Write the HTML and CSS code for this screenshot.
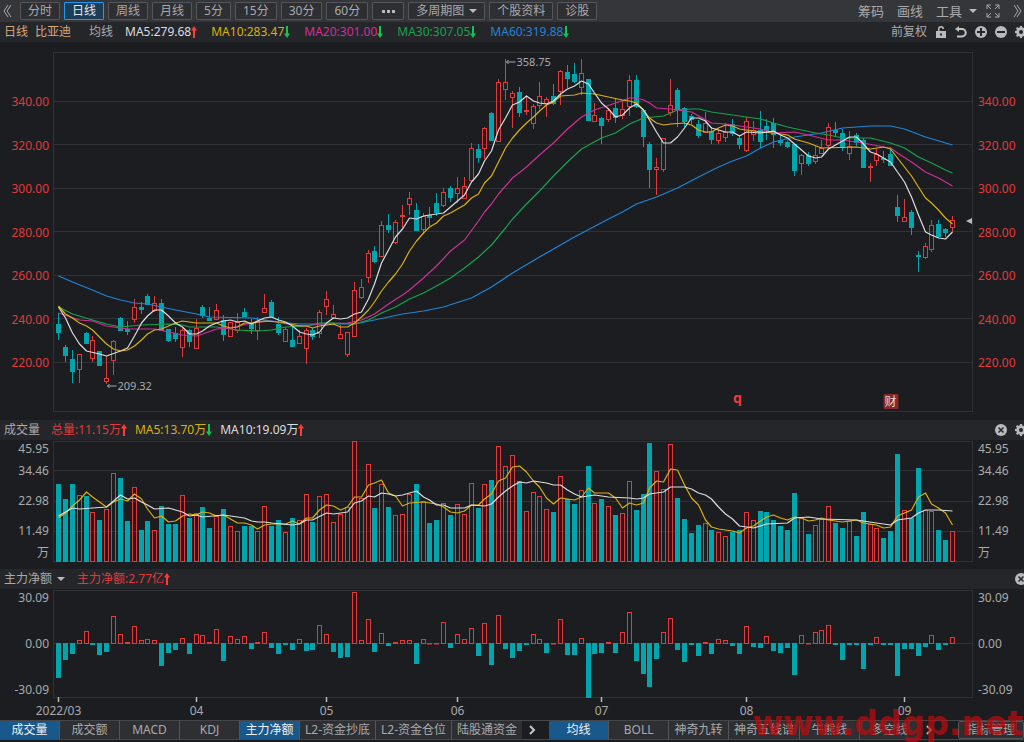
FILE: index.html
```html
<!DOCTYPE html>
<html lang="zh-CN">
<head>
	<meta charset="utf-8" />
	<title>比亚迪 日线</title>
	<link rel="stylesheet" href="styles.css">
</head>
<body>
	<svg class="defs" aria-hidden="true">
		<symbol id="gear" viewBox="0 0 12 12">
			<path fill-rule="evenodd" d="M5 0h2l.3 1.6 1 .4L9.600 1.100 11 2.500l-.9 1.300.4 1L12 5v2l-1.500.3-.4 1 .9 1.300L9.600 11l-1.300-.9-1 .4L7 12H5l-.3-1.500-1-.4-1.300.9L1 9.600l.9-1.300-.4-1L0 7V5l1.500-.3.4-1L1 2.400 2.400 1l1.300.9 1-.4zM6 4a2 2 0 1 0 0 4 2 2 0 0 0 0-4z" />
		</symbol>
		<symbol id="close" viewBox="0 0 12 12">
			<circle cx="6" cy="6" r="6" />
			<path class="cut" d="M3.500 3.500l5 5M8.500 3.500l-5 5" />
		</symbol>
		<symbol id="up" viewBox="0 0 6 12">
			<path d="M3 0l3 4.500H4V12H2V4.500H0z" />
		</symbol>
		<symbol id="down" viewBox="0 0 6 12">
			<path d="M3 12l3-4.500H4V0H2v7.500H0z" />
		</symbol>
		<symbol id="next" viewBox="0 0 8 10">
			<path class="line" d="M2 1l4 4-4 4" />
		</symbol>
	</svg>

	<header class="toolbar">
		<button class="icon" aria-label="收起"><svg width="9" height="12"><path class="thin" d="M5 0L1 6l4 6M8 0L4 6l4 6" /></svg></button>
		<nav class="periods">
			<button>分时</button>
			<button class="active">日线</button>
			<button>周线</button>
			<button>月线</button>
			<button>5分</button>
			<button>15分</button>
			<button>30分</button>
			<button>60分</button>
			<button aria-label="更多"><svg width="16" height="3"><path d="M2 0h3v3H2zM7 0h3v3H7zM12 0h3v3h-3z" /></svg></button>
			<span class="drop boxed"><select aria-label="多周期图"><option>多周期图</option></select></span>
			<button>个股资料</button>
			<button>诊股</button>
		</nav>
		<div class="tools">
			<button>筹码</button>
			<button>画线</button>
			<span class="drop"><select aria-label="工具"><option>工具</option></select></span>
			<button class="icon" aria-label="全屏"><svg width="14" height="14"><path class="thin" d="M1 5V1h4M1 1l4 4M9 1h4v4M13 1L9 5M1 9v4h4M1 13l4-4M13 9v4H9M13 13L9 9" /></svg></button>
			<button class="icon" aria-label="展开"><svg width="9" height="12"><path class="thin" d="M1 0l4 6-4 6M4 0l4 6-4 6" /></svg></button>
		</div>
	</header>

	<section class="panel price">
		<div class="info">
			<span class="stock">日线</span>
			<span class="stock">比亚迪</span>
			<span class="label">均线</span>
			<span class="white">MA5:279.68<svg class="up"><use href="#up" /></svg></span>
			<span class="yellow">MA10:283.47<svg class="down"><use href="#down" /></svg></span>
			<span class="pink">MA20:301.00<svg class="down"><use href="#down" /></svg></span>
			<span class="green">MA30:307.05<svg class="down"><use href="#down" /></svg></span>
			<span class="blue">MA60:319.88<svg class="down"><use href="#down" /></svg></span>
			<div class="actions">
				<button>前复权</button>
				<button class="icon" aria-label="锁定"><svg width="12" height="12"><path fill-rule="evenodd" d="M1 5h2V3a3 3 0 0 1 6 0H7.500a1.500 1.500 0 0 0-3 0v2H11v7H1zM5 7.500v2h2v-2z" /></svg></button>
				<button class="icon" aria-label="撤销"><svg width="12" height="12"><path d="M4 0v6L0 3z" /><path class="line" d="M3 3h4a3.500 3.500 0 0 1 0 7.500H2" /></svg></button>
				<button class="icon" aria-label="放大"><svg width="12" height="12"><circle cx="6" cy="6" r="6" /><path class="cut plus" d="M2 6h8M6 2v8" /></svg></button>
				<button class="icon" aria-label="缩小"><svg width="12" height="12"><circle cx="6" cy="6" r="6" /><path class="cut plus" d="M2 6h8" /></svg></button>
				<button class="icon" aria-label="设置"><svg width="12" height="12"><use href="#gear" /></svg></button>
			</div>
		</div>
		<div class="chart">
			<div class="axis"><span>340.00</span><span>320.00</span><span>300.00</span><span>280.00</span><span>260.00</span><span>240.00</span><span>220.00</span></div>
			<svg class="plot" id="price"></svg>
			<div class="axis right"><span>340.00</span><span>320.00</span><span>300.00</span><span>280.00</span><span>260.00</span><span>240.00</span><span>220.00</span></div>
		</div>
	</section>

	<section class="panel volume">
		<div class="info">
			<span class="label">成交量</span>
			<span class="red">总量:11.15万<svg class="up"><use href="#up" /></svg></span>
			<span class="yellow">MA5:13.70万<svg class="down"><use href="#down" /></svg></span>
			<span class="white">MA10:19.09万<svg class="up"><use href="#up" /></svg></span>
			<div class="actions">
				<button class="icon" aria-label="关闭"><svg width="12" height="12"><use href="#close" /></svg></button>
				<button class="icon" aria-label="设置"><svg width="12" height="12"><use href="#gear" /></svg></button>
			</div>
		</div>
		<div class="chart">
			<div class="axis"><span>45.95</span><span>34.46</span><span>22.98</span><span>11.49</span><span>万</span></div>
			<svg class="plot" id="volume"></svg>
			<div class="axis right"><span>45.95</span><span>34.46</span><span>22.98</span><span>11.49</span><span>万</span></div>
		</div>
	</section>

	<section class="panel flow">
		<div class="info">
			<span class="drop"><select aria-label="指标"><option>主力净额</option></select></span>
			<span class="red">主力净额:2.77亿<svg class="up"><use href="#up" /></svg></span>
			<div class="actions">
				<button class="icon" aria-label="关闭"><svg width="12" height="12"><use href="#close" /></svg></button>
			</div>
		</div>
		<div class="chart">
			<div class="axis"><span>30.09</span><span>0.00</span><span>-30.09</span></div>
			<svg class="plot" id="flow"></svg>
			<div class="axis right"><span>30.09</span><span>0.00</span><span>-30.09</span></div>
		</div>
	</section>

	<footer class="bottom">
		<nav class="tabs">
			<button class="active">成交量</button>
			<button>成交额</button>
			<button>MACD</button>
			<button>KDJ</button>
			<button class="active">主力净额</button>
			<button>L2-资金抄底</button>
			<button>L2-资金仓位</button>
			<button>陆股通资金</button>
		</nav>
		<button class="icon" aria-label="下一组"><svg width="8" height="10"><use href="#next" /></svg></button>
		<nav class="tabs">
			<button class="active">均线</button>
			<button>BOLL</button>
			<button>神奇九转</button>
			<button>神奇五线谱</button>
			<button>牛熊线</button>
			<button>多空线</button>
		</nav>
		<button class="icon" aria-label="下一组"><svg width="8" height="10"><use href="#next" /></svg></button>
		<button class="manage">指标管理</button>
		<span class="watermark">www.ddgp.net</span>
	</footer>

	<script src="chart.js"></script>
</body>
</html>
```

FILE: styles.css
```css
body {
	margin: 0;
	min-height: 100vh;
	overflow: hidden;
	background: #1c1d20;
	color: #a9aaac;
	font-family: "Noto Sans", "Noto Sans CJK SC", sans-serif;
	font-size: 12px;
	line-height: 16px;
}

button, select {
	margin: 0;
	padding: 0;
	border: 0;
	background: none;
	color: inherit;
	font: inherit;
	white-space: nowrap;
}

select {
	appearance: none;
}

svg {
	fill: #b9babc;
}

.defs {
	display: none;
}

.thin {
	fill: none;
	stroke: #a9aaac;
}

.line {
	fill: none;
	stroke: #c4c5c7;
	stroke-width: 2;
}

.cut {
	fill: none;
	stroke: #25262a;
	stroke-width: 1.5;
}

.plus {
	stroke-width: 2;
}

.icon {
	display: flex;
	flex: none;
	align-items: center;
	justify-content: center;
}

.drop {
	display: flex;
	align-items: center;
	gap: 4px;
}

	.drop::after {
		content: "";
		border: 4px solid transparent;
		border-top-color: #b9babc;
		border-bottom: 0;
	}

/* toolbar */

.toolbar {
	display: flex;
	align-items: center;
	height: 22px;
	padding: 0 2px 0 3px;
	background: #35363a;
}

.periods {
	display: flex;
	gap: 4px;
	margin-left: 8px;
}

	.periods > * {
		box-sizing: border-box;
		height: 18px;
		padding: 0 7px;
		border: 1px solid #55565a;
		border-radius: 1px;
		background: #2e2f33;
	}

	.periods > button {
		line-height: 16px;
	}

		.periods > button svg {
			display: block;
		}

	.periods > .active {
		border-color: #1e9bf0;
		background: #1d3c56;
		color: #e4e8ec;
	}

.tools {
	display: flex;
	align-items: center;
	gap: 13px;
	margin-left: auto;
	font-size: 13px;
}

	.tools .drop {
		gap: 6px;
		margin-right: -4px;
	}

/* panels */

.info {
	display: flex;
	align-items: center;
	gap: 14px;
	height: 20px;
	padding: 0 0 0 4px;
	background: #25262a;
}

	.info span {
		white-space: nowrap;
	}

	.info span > svg {
		width: 6px;
		height: 12px;
		vertical-align: -2px;
	}

.actions {
	display: flex;
	align-items: center;
	gap: 8px;
	margin: 0 -3px 0 auto;
}

.stock { color: #d5a679; }
.stock + .stock { margin-left: -7px; }
.stock + .label { margin: 0 -2px 0 4px; }
.white { color: #dcdddf; }
.yellow { color: #d9b012; }
.pink { color: #cf3097; }
.green { color: #16a34a; }
.blue { color: #2185d5; }
.red { color: #e03a3a; }
svg.up { fill: #ff3b3b; }
svg.down { fill: #14c452; }

.chart {
	display: grid;
	grid-template-columns: 53px minmax(0, 1fr) 51px;
}

.plot {
	display: block;
	width: 100%;
	overflow: visible;
}

.axis {
	display: flex;
	flex-direction: column;
	justify-content: space-between;
	padding-right: 4px;
	text-align: right;
}

	.axis.right {
		padding: 0 0 0 5px;
		text-align: left;
	}

.price .chart { padding: 10px 0 8px; }
.price .plot { height: 360px; }

.price .axis {
	margin: 42px 0 41px;
	color: #e03a3a;
}

.volume .info, .flow .info {
	gap: 8px;
}

.volume .label { margin-right: 3px; }
.volume .chart { padding: 1px 0 7px; }
.volume .plot { height: 121px; }

.volume .axis {
	display: grid;
	grid-template-columns: 1fr;
	grid-template-rows: 22px 30px 30px 22px 16px;
	align-content: start;
}

.flow .red { margin-left: 4px; }
.flow .chart { padding: 1px 0 22px; }
.flow .plot { height: 108px; }

/* bottom tabs */

.bottom {
	position: relative;
	display: flex;
	align-items: center;
	height: 18px;
	border-top: 1px solid #45464a;
	border-bottom: 1px solid #45464a;
}

	.bottom > .icon {
		width: 20px;
		margin-right: 7px;
	}

.tabs {
	display: flex;
	gap: 1px;
	background: #55565a;
}

	.tabs button {
		height: 18px;
		min-width: 59px;
		padding: 0 5px;
		background: #2e2f33;
	}

	.tabs .active {
		background: #19588a;
		color: #f0f2f4;
	}

.manage {
	height: 18px;
	margin-left: auto;
	padding: 0 8px;
	border: 1px solid #55565a;
	border-radius: 2px;
	background: #2e2f33;
}

.watermark {
	position: absolute;
	right: 1px;
	bottom: -3px;
	color: rgba(190, 10, 14, .72);
	font: bold 33px/36px "DejaVu Sans", sans-serif;
	pointer-events: none;
}

/* plot contents */

.frame, .grid {
	fill: none;
	stroke: #303135;
}

.rise {
	fill: none;
	stroke: #e23a3a;
}

.fall {
	fill: #00a5ae;
	stroke: #00a5ae;
}

.ma {
	fill: none;
	stroke: currentColor;
	stroke-width: 1.2;
	stroke-linejoin: round;
}

.note, .date {
	fill: #a9aaac;
}

.note {
	font-size: 11px;
}

.date {
	text-anchor: middle;
}

.tick {
	stroke: #b9babc;
	stroke-width: 1.5;
}

.mark {
	fill: #f03a3a;
	font-size: 14px;
	font-weight: bold;
	text-anchor: middle;
}

.badge {
	fill: #86292b;
}

.badge-text {
	fill: #e6d6d6;
	text-anchor: middle;
}
```

FILE: chart.js
```js
// direction, high, body top, body bottom, low
const candles = `
d 313 324 332 340,d 345 347 355 362,d 350 359 371 383,u 354 354 369 383,d 332 333 343 343,u 336 340 358 362,d 351 351 365 365,u 356 378 381 384,u 340 341 360 375,d 317 318 330 330,
d 321 329 331 335,u 299 307 319 323,d 302 307 309 314,d 294 296 304 305,u 296 303 310 312,d 299 303 330 331,d 329 329 340 342,d 327 333 338 342,u 327 330 347 357,d 329 330 341 347,
u 319 328 348 348,d 305 307 315 318,d 307 318 320 321,u 304 310 319 320,d 315 320 334 341,u 322 322 336 337,u 313 322 330 333,d 308 312 316 317,d 319 324 328 334,u 317 321 330 340,
u 294 308 312 312,d 300 302 316 317,d 317 324 332 335,u 327 329 341 342,d 327 340 346 347,u 330 336 343 343,u 328 330 348 364,d 328 330 336 340,u 310 312 333 338,u 291 299 306 315,
u 305 314 317 317,u 325 334 338 338,u 332 332 354 357,u 282 290 336 336,u 279 287 297 299,u 250 253 277 283,d 246 251 261 263,u 221 225 256 256,d 214 225 229 233,u 220 222 242 244,
u 205 215 216 228,u 192 198 204 215,d 203 210 230 230,u 213 216 229 234,d 207 215 217 226,d 193 203 212 216,u 188 192 205 207,d 186 188 197 202,u 177 188 193 203,u 177 186 198 198,
u 143 148 180 181,d 144 149 157 163,u 127 128 148 159,d 112 113 140 141,u 79 82 141 141,u 59 82 89 100,u 91 93 97 128,d 87 92 112 117,u 95 110 111 115,u 104 106 123 129,
u 82 96 105 109,u 97 99 103 117,d 84 96 103 105,u 70 71 91 105,d 65 72 78 88,d 63 74 81 83,u 59 73 87 95,d 79 79 120 121,u 103 115 121 122,d 117 118 125 144,
u 108 110 119 122,d 99 108 117 123,u 101 109 115 119,u 75 80 106 116,d 75 80 106 108,d 109 110 136 147,d 142 144 169 188,u 158 167 169 195,u 138 138 169 172,u 79 105 112 116,
d 88 90 109 127,d 107 108 121 127,d 114 116 119 124,d 120 124 135 138,u 112 123 132 133,d 127 131 139 144,u 130 133 140 144,u 123 132 137 142,d 119 124 133 136,d 135 138 144 149,
u 117 121 150 152,u 121 130 134 141,d 111 130 141 148,d 119 126 130 140,d 118 123 134 148,d 135 140 142 146,d 140 142 146 148,d 144 144 170 176,u 154 155 163 175,d 152 155 163 166,
u 146 155 161 164,u 140 148 153 153,u 123 127 145 149,d 122 130 132 136,d 129 133 147 151,u 131 146 153 160,d 133 135 142 146,d 138 140 167 168,u 163 166 167 182,u 148 154 160 166,
d 151 158 159 163,d 147 154 165 166,d 195 207 215 222,u 199 217 221 222,d 210 212 227 235,d 251 255 256 272,u 243 246 257 259,u 220 225 249 252,d 220 224 236 238,d 228 229 232 237,
u 216 220 227 232`.trim().split(',').map(s => s.trim().split(' ').map((v, i) => i ? +v : v));

const volumes = [
	484, 499, 484, 495, 496, 512, 520, 509, 473, 478, 521, 487, 530, 521, 530, 506, 524, 524, 495, 518,
	513, 507, 528, 516, 509, 526, 531, 526, 526, 531, 506, 526, 520, 532, 518, 520, 494, 522, 496, 494,
	522, 514, 507, 441, 498, 464, 508, 484, 507, 515, 514, 494, 484, 501, 523, 520, 503, 515, 504, 514,
	483, 508, 484, 480, 446, 466, 455, 481, 511, 492, 496, 509, 512, 476, 499, 504, 490, 466, 503, 499,
	506, 515, 513, 481, 510, 494, 443, 471, 489, 444, 498, 519, 533, 525, 523, 530, 532, 536, 532, 530,
	512, 520, 511, 512, 520, 526, 530, 493, 518, 534, 525, 519, 506, 523, 528, 521, 536, 512, 524, 528,
	538, 531, 454, 510, 518, 468, 510, 511, 530, 540, 531
];

const flows = [
	-34, -16, -10, 3, 12, -1, -11, -8, 27, 9, 1, 17, 3, 4, 3, -22, -9, -6, 5, -10,
	9, 8, 1, 14, -17, 7, 4, 7, -5, 1, 11, -4, -10, -1, -6, 4, -7, -6, 18, 9,
	-8, -14, -13, 51, 3, 24, -8, 10, -2, 1, 3, 3, -20, 4, 0, 0, 21, -4, 9, 4,
	15, -12, 20, -21, 28, -5, -14, -7, -1, 9, 4, -9, 0, 24, -11, -11, 5, -54, -10, -9,
	1, -9, 11, 31, -17, -30, -43, -15, 11, 25, -6, -18, -1, -12, 1, -10, 4, 3, -2, -10,
	17, -3, -4, 7, -7, -9, -4, -31, 8, 0, 11, 13, 18, -1, -16, -1, -1, -25, -1, 6,
	-1, -1, -32, -5, -5, -12, -3, 8, -6, -1, 6
];

// day:level pairs
const averages = {
	blue: '0:276 2:282 5:290 7:296 9:300 11:303 13:304 17:310 20:314 22:317 28:318 32:322 35:324 38:324 43:324 46:320 50:314 53:311 56:307 60:298 63:287 66:273 70:257 75:237 80:219 82:212 84:204 87:197 90:188 93:177 96:167 98:161 100:156 102:148 104:142 107:137 111:133 114:128 118:126 121:126 123:129 126:137 130:145',
	green: '0:307 2:314 5:320 7:324 9:327 12:325 16:324 18:325 19:327 23:327 26:330 29:331 31:330 33:327 36:326 38:323 40:323 43:324 45:320 47:313 49:307 51:299 53:293 55:286 57:278 59:268 61:257 63:245 65:228 66:219 68:204 70:191 72:176 74:162 76:149 79:138 81:133 83:124 85:118 88:116 90:110 92:109 93:109 95:112 98:115 102:119 104:123 106:127 108:130 110:133 112:135 114:138 118:138 121:143 123:148 125:157 127:163 129:170 130:173',
	pink: '0:313 3:320 5:321 7:326 10:329 14:329 16:332 18:335 20:336 21:334 23:329 25:328 28:323 31:321 34:325 36:326 38:324 42:323 44:320 46:314 48:304 50:295 51:290 53:278 55:266 57:251 59:240 61:221 62:212 63:204 64:194 66:178 68:167 70:155 71:149 72:143 74:129 76:117 78:110 81:103 83:98 84:98 85:100 86:103 87:108 89:109 91:111 92:112 95:123 97:124 100:127 102:129 104:133 107:132 109:135 112:140 114:140 117:143 120:147 121:148 122:153 124:162 126:172 128:178 130:186',
	yellow: '0:306 1:314 2:318 3:323 4:326 5:330 6:337 7:344 8:349 9:351 10:350 11:346 12:340 13:334 14:330 15:329 16:326 17:323 18:321 20:323 23:323 24:326 25:328 26:327 27:323 28:323 30:321 32:322 33:323 35:326 36:326 37:328 38:326 40:324 41:327 42:327 43:323 44:317 45:310 46:302 47:291 48:282 49:274 50:264 51:251 52:241 53:233 54:227 55:223 56:216 57:213 58:209 59:205 60:198 61:194 62:183 63:176 64:162 65:148 66:138 67:130 68:123 69:117 70:111 71:105 72:102 73:96 75:95 76:93 78:94 80:97 82:100 83:101 84:103 85:110 86:118 87:123 88:125 89:124 91:123 92:125 93:130 94:132 95:132 96:128 97:125 98:126 99:129 101:131 104:133 106:135 107:139 109:143 111:148 116:147 118:149 120:147 121:149 122:158 123:167 124:176 125:187 126:198 127:203 128:210 129:218 130:224',
	white: '0:307 1:318 2:333 3:344 4:351 6:354 7:356 9:351 10:348 11:336 12:323 13:316 14:310 15:310 16:316 17:323 18:327 19:334 20:334 21:331 22:326 23:323 24:321 25:320 26:322 27:321 28:324 29:321 30:318 31:317 32:320 33:322 34:326 35:332 36:334 37:335 38:332 39:323 40:318 41:319 42:318 43:314 44:312 45:299 46:284 47:263 48:250 49:237 50:229 51:218 52:219 53:216 54:215 55:214 56:213 57:207 58:201 59:195 60:182 61:174 62:161 63:151 64:130 65:118 66:105 67:102 68:96 69:101 70:103 71:104 72:101 73:94 74:89 75:86 76:81 77:84 78:93 79:103 80:109 81:117 82:115 83:108 84:104 85:110 86:120 87:132 88:143 89:143 90:137 91:128 92:118 93:118 94:121 95:128 96:130 97:132 98:132 99:136 100:132 102:133 104:131 105:135 106:138 107:144 108:150 109:156 110:158 111:157 112:149 113:145 114:141 115:137 116:137 117:144 118:152 119:154 120:158 121:162 122:172 123:182 124:197 125:215 126:232 127:235 128:238 129:239 130:232'
};

const volumeAverages = {
	yellow: '0:518 1:513 2:506 3:500 4:492 5:497 6:502 7:507 8:502 9:499 10:501 11:494 12:499 13:509 14:518 15:516 16:522 17:521 18:516 19:514 20:515 21:512 22:513 23:516 24:515 25:519 26:523 27:523 28:525 29:529 30:525 31:524 33:524 34:521 35:524 36:518 37:518 38:510 39:505 40:506 41:510 42:507 43:497 44:497 45:485 46:483 47:480 48:493 49:496 50:506 51:503 53:502 55:504 56:507 57:512 58:513 59:511 60:505 61:505 62:499 63:494 64:481 65:478 66:467 67:466 68:472 69:481 70:487 71:498 72:504 73:498 75:500 76:497 77:488 78:493 80:493 81:498 82:508 83:503 84:505 85:503 86:488 87:481 88:482 89:469 90:470 91:485 92:498 93:505 94:520 95:527 96:529 98:531 99:533 100:528 101:526 102:521 103:517 104:515 105:518 106:520 107:517 108:518 109:521 110:520 111:518 112:520 114:522 116:520 117:523 119:525 120:528 121:527 122:516 123:513 124:510 125:497 126:493 127:504 128:508 129:513 130:525',
	white: '0:516 2:508 3:509 5:508 7:507 8:501 9:495 10:499 11:498 12:502 13:505 14:509 16:508 18:512 19:516 20:515 21:517 24:515 27:518 28:521 29:522 30:522 31:523 34:525 35:524 36:520 37:520 39:513 40:514 41:513 42:512 43:503 44:501 45:496 46:497 47:493 48:494 49:496 50:495 51:493 52:491 53:497 54:500 55:505 56:505 57:508 59:508 60:505 62:506 63:504 64:497 65:491 66:486 67:482 68:483 69:481 71:483 72:485 73:485 74:490 75:494 76:497 78:495 80:497 83:498 84:499 85:498 86:494 87:493 88:492 89:487 91:487 92:489 93:493 94:495 95:499 96:507 97:514 98:519 99:526 101:528 103:524 106:523 107:518 109:517 111:519 116:520 119:523 121:525 122:520 124:518 125:513 126:510 128:510 130:511'
};

const months = { 0: '2022/03', 20: '04', 39: '05', 58: '06', 79: '07', 100: '08', 123: '09' };

const priceSvg = document.getElementById('price');
const volumeSvg = document.getElementById('volume');
const flowSvg = document.getElementById('flow');

draw();
window.addEventListener('resize', draw);

function draw() {
	const width = priceSvg.clientWidth;
	const step = (width - 19) / candles.length;
	const x = i => Math.round(5 + i * step) + 0.5;

	const frame = (top, height) => `<rect class="frame" x=".5" y="${top}.5" width="${width - 1}" height="${height - 1}"/>`;
	const grid = levels => levels.map(y => `<path class="grid" d="M0 ${y}.5H${width}"/>`).join('');
	const bar = (i, up, top, bottom) => `<rect class="${up ? 'rise' : 'fall'}" x="${x(i) - 2}" y="${top + 0.5}" width="4" height="${Math.max(bottom - top - 1, 0.5)}"/>`;
	const lines = set => Object.keys(set).map(color => {
		const points = set[color].split(' ').map(p => p.split(':')).map(p => x(+p[0]) + ',' + p[1]);
		return `<polyline class="ma ${color}" points="${points.join(' ')}"/>`;
	}).join('');
	const note = (i, y, text) => `<path class="thin" d="M${x(i) + 1} ${y}h9m-7-2l-2 2 2 2"/><text class="note" x="${x(i) + 11}" y="${y + 4}">${text}</text>`;

	// price
	let html = frame(52, 360) + grid([101, 144, 188, 231, 275, 318, 362]);
	candles.forEach(([dir, high, top, bottom, low], i) => {
		const up = dir == 'u';
		html += `<path class="${up ? 'rise' : 'fall'}" d="M${x(i)} ${high}V${top}M${x(i)} ${bottom}V${low}"/>`;
		html += bar(i, up, top, bottom + 1);
	});
	html += lines(averages) + note(65, 62, '358.75') + note(7, 386, '209.32');
	html += `<path d="M${width - 1} 218v6l-6-3z"/>`;
	html += `<text class="mark" x="${x(99) - 2}" y="403">q</text>`;
	html += `<rect class="badge" x="${x(121) - 7}" y="394" width="15" height="15" rx="1"/><text class="badge-text" x="${x(121)}" y="406">财</text>`;
	priceSvg.setAttribute('viewBox', `0 52 ${width} 360`);
	priceSvg.innerHTML = html;

	// volume
	html = frame(441, 121) + grid([470, 501, 531]);
	volumes.forEach((top, i) => html += bar(i, candles[i][0] == 'u', top, 562));
	volumeSvg.setAttribute('viewBox', `0 441 ${width} 121`);
	volumeSvg.innerHTML = html + lines(volumeAverages);

	// money flow and the dates under it
	html = frame(590, 108) + grid([643]);
	flows.forEach((v, i) => html += bar(i, v >= 0, v >= 0 ? 643 - v : 643, v >= 0 ? 644 : 644 - v));
	for (const i in months)
		html += `<path class="tick" d="M${x(+i)} 697v5"/><text class="date" x="${x(+i)}" y="715">${months[i]}</text>`;
	flowSvg.setAttribute('viewBox', `0 590 ${width} 108`);
	flowSvg.innerHTML = html;
}
```
